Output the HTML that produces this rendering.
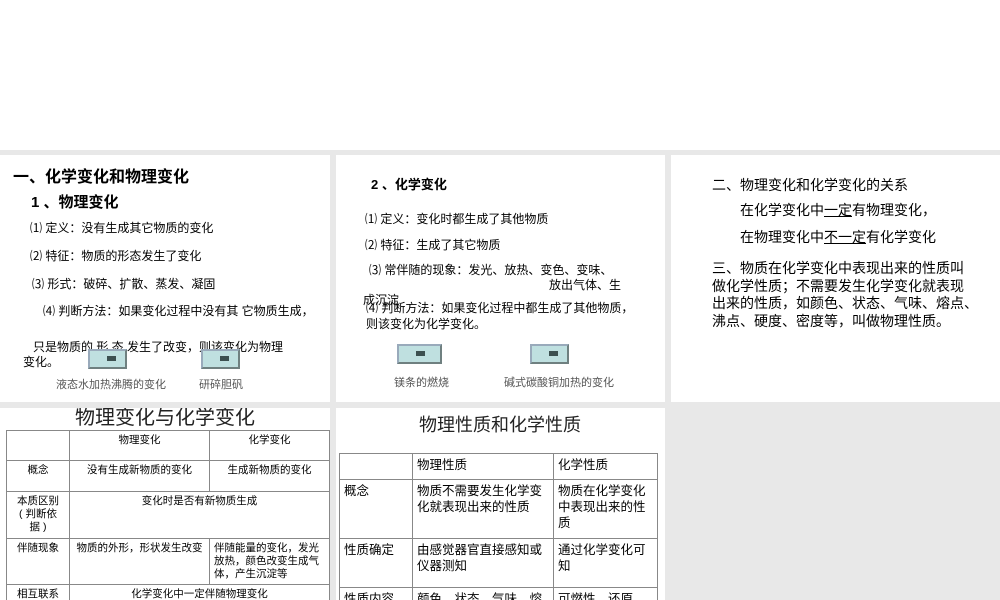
<!DOCTYPE html>
<html><head><meta charset="utf-8"><style>
*{margin:0;padding:0;box-sizing:border-box}
html,body{width:1000px;height:600px;overflow:hidden}
body{background:#fff;position:relative;font-family:"Liberation Sans","Noto Sans CJK SC",sans-serif;color:#000}
.grey{position:absolute;background:#e8e8e8}
.p{position:absolute;background:#fff;overflow:hidden}
.t{position:absolute;white-space:nowrap;font-size:13px;line-height:16px}
.b{font-weight:bold}
.btn{position:absolute;width:45px;height:20px;background:#bfe0e0;border:2px solid #6f8080;border-top-color:#9ab;border-left-color:#9ab}
.btn:after{content:"";position:absolute;left:17px;top:5px;width:9px;height:5px;background:#3c5050}
.cap{position:absolute;font-size:11px;color:#555;white-space:nowrap}
table{position:absolute;border-collapse:collapse;font-size:10.5px}
td{border:1px solid #888;vertical-align:top;padding:3px 4px;line-height:13px}
.t2 td{padding:3px 4px;line-height:16px}
</style></head><body>
<div class="grey" style="left:0;top:150px;width:1000px;height:450px"></div>
<div class="p" style="left:0;top:155px;width:330px;height:247px"></div>
<div class="p" style="left:336px;top:155px;width:329px;height:247px"></div>
<div class="p" style="left:671px;top:155px;width:329px;height:247px"></div>
<div class="p" style="left:0;top:408px;width:330px;height:192px"></div>
<div class="p" style="left:336px;top:408px;width:329px;height:192px"></div>

<div class="t b" style="left:13px;top:169px;font-size:16px;line-height:18px">一、化学变化和物理变化</div>
<div class="t b" style="left:31px;top:195px;font-size:15px">1 、物理变化</div>
<div class="t" style="left:30px;top:220px;font-size:12px">⑴ 定义：没有生成其它物质的变化</div>
<div class="t" style="left:30px;top:248px;font-size:12px">⑵ 特征：物质的形态发生了变化</div>
<div class="t" style="left:32px;top:276px;font-size:12px">⑶ 形式：破碎、扩散、蒸发、凝固</div>
<div class="t" style="left:43px;top:303px;font-size:12px">⑷ 判断方法：如果变化过程中没有其 它物质生成，</div>
<div class="t" style="left:33px;top:339px;font-size:12px">只是物质的 形 态 发生了改变，则该变化为物理</div>
<div class="t" style="left:23px;top:354px;font-size:12px">变化。</div>
<div class="btn" style="left:88px;top:349px;width:39px;height:20px"></div>
<div class="btn" style="left:201px;top:349px;width:39px;height:20px"></div>
<div class="cap" style="left:56px;top:376px">液态水加热沸腾的变化</div>
<div class="cap" style="left:199px;top:376px">研碎胆矾</div>

<div class="t b" style="left:371px;top:177px;font-size:13px">2 、化学变化</div>
<div class="t" style="left:365px;top:211px;font-size:12px">⑴ 定义：变化时都生成了其他物质</div>
<div class="t" style="left:365px;top:237px;font-size:12px">⑵ 特征：生成了其它物质</div>
<div class="t" style="left:369px;top:262px;font-size:12px">⑶ 常伴随的现象：发光、放热、变色、变味、</div>
<div class="t" style="left:549px;top:277px;font-size:12px">放出气体、生</div>
<div class="t" style="left:363px;top:292px;font-size:12px">成沉淀</div>
<div class="t" style="left:366px;top:300px;font-size:12px">⑷ 判断方法：如果变化过程中都生成了其他物质，</div>
<div class="t" style="left:366px;top:316px;font-size:12px">则该变化为化学变化。</div>
<div class="btn" style="left:397px;top:344px"></div>
<div class="btn" style="left:530px;top:344px;width:39px"></div>
<div class="cap" style="left:394px;top:374px">镁条的燃烧</div>
<div class="cap" style="left:504px;top:374px">碱式碳酸铜加热的变化</div>

<div class="t" style="left:712px;top:177px;font-size:14px">二、物理变化和化学变化的关系</div>
<div class="t" style="left:740px;top:202px;font-size:14px">在化学变化中<u>一定</u>有物理变化，</div>
<div class="t" style="left:740px;top:229px;font-size:14px">在物理变化中<u>不一定</u>有化学变化</div>
<div class="t" style="left:712px;top:260px;font-size:14px;line-height:17.5px">三、物质在化学变化中表现出来的性质叫<br>做化学性质；不需要发生化学变化就表现<br>出来的性质，如颜色、状态、气味、熔点、<br>沸点、硬度、密度等，叫做物理性质。</div>

<div class="p" style="left:0;top:408px;width:330px;height:192px">
<div class="t" style="left:75px;top:-2px;font-size:20px;line-height:24px;color:#222">物理变化与化学变化</div>
<table style="left:6px;top:22px;width:324px;text-align:center">
<tr style="height:30px"><td style="width:63px"></td><td style="width:140px">物理变化</td><td>化学变化</td></tr>
<tr style="height:31px"><td>概念</td><td>没有生成新物质的变化</td><td>生成新物质的变化</td></tr>
<tr style="height:47px"><td>本质区别<br>( 判断依<br>据 )</td><td colspan="2">变化时是否有新物质生成</td></tr>
<tr style="height:42px"><td>伴随现象</td><td>物质的外形，形状发生改变</td><td style="text-align:left">伴随能量的变化，发光放热，颜色改变生成气体，产生沉淀等</td></tr>
<tr style="height:30px"><td>相互联系</td><td colspan="2">化学变化中一定伴随物理变化</td></tr>
</table>
</div>

<div class="p" style="left:336px;top:408px;width:329px;height:192px">
<div class="t" style="left:83px;top:6px;font-size:18px;line-height:22px;color:#222">物理性质和化学性质</div>
<table class="t2" style="left:3px;top:45px;width:319px;font-size:12.5px">
<tr style="height:26px"><td style="width:73px"></td><td style="width:141px">物理性质</td><td>化学性质</td></tr>
<tr style="height:59px"><td>概念</td><td>物质不需要发生化学变化就表现出来的性质</td><td>物质在化学变化中表现出来的性质</td></tr>
<tr style="height:49px"><td>性质确定</td><td>由感觉器官直接感知或仪器测知</td><td>通过化学变化可知</td></tr>
<tr style="height:30px"><td>性质内容</td><td>颜色，状态，气味，熔</td><td>可燃性，还原性，</td></tr>
</table>
</div>
</body></html>
